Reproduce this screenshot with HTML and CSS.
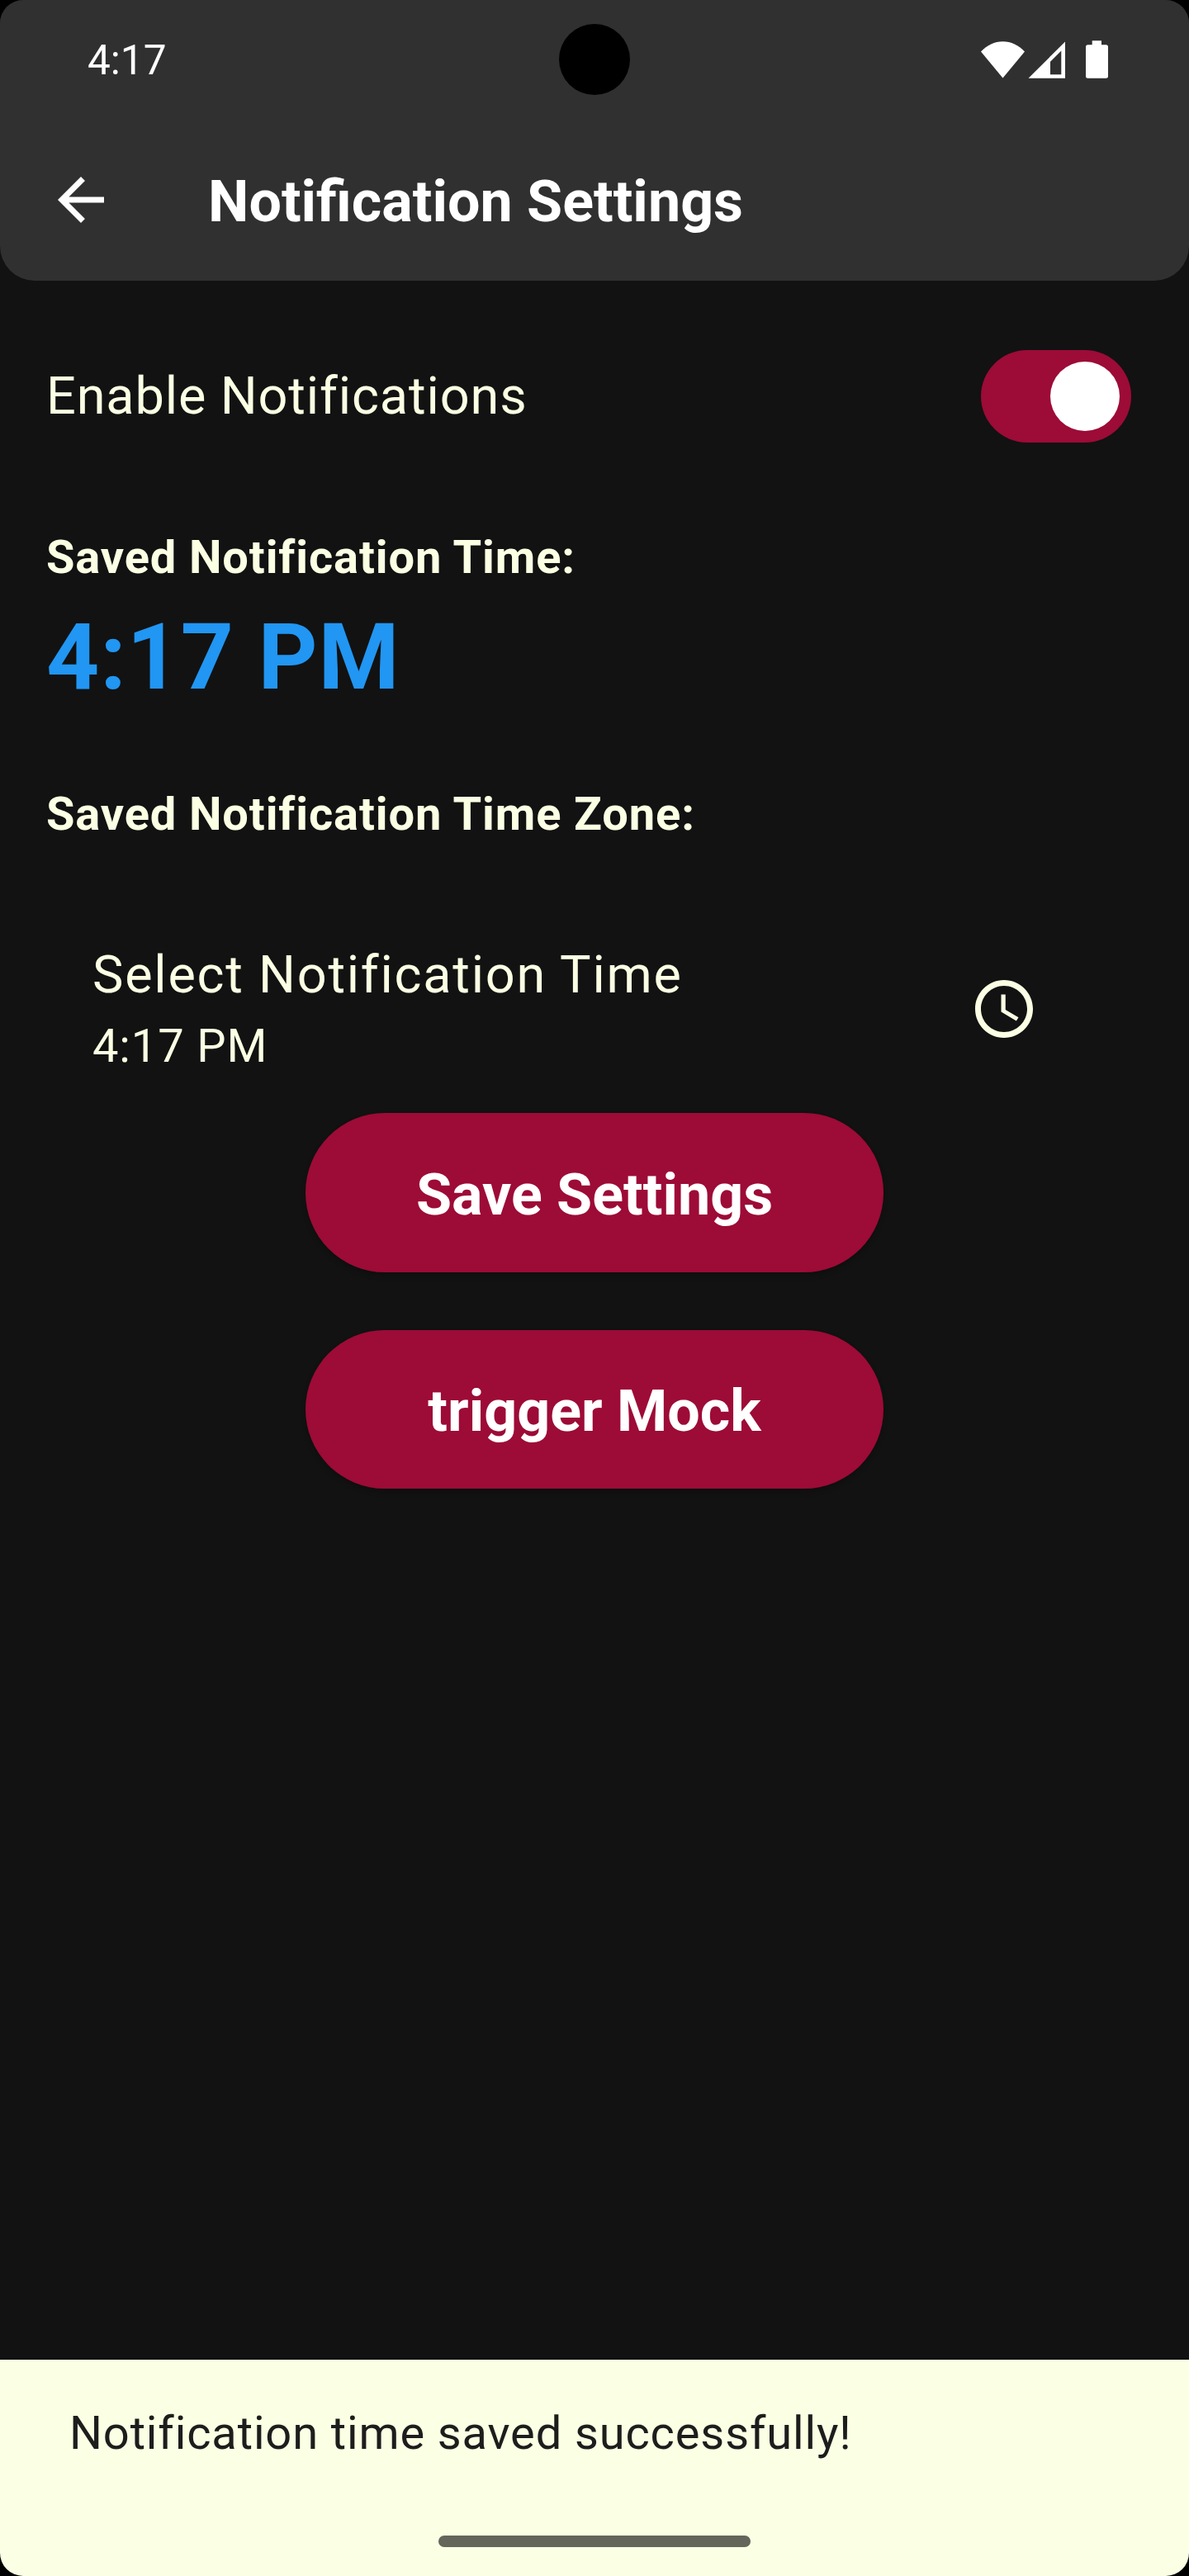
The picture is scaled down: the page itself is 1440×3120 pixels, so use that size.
FILE: index.html
```html
<!DOCTYPE html>
<html lang="en">
<head>
<meta charset="utf-8">
<title>Notification Settings</title>
<link rel="stylesheet" href="styles.css">
</head>
<body>
<div class="screen">
  <header class="header">
    <div class="status">
      <span class="status-time">4:17</span>
      <svg class="status-icons" width="160" height="50" viewBox="0 0 160 50" fill="#fff">
        <path d="M3 16.5C10.500 8.500 19.500 4.200 29.500 4.200S48.500 8.500 56 16.500L29.500 48.500z"/>
        <path fill-rule="evenodd" d="M60.500 48.700L105 4.500V48.700zM87 44.200H100.300V15.500L87 28.700z"/>
        <path d="M137.700 3.200H149V8.200H154.500A2.500 2.500 0 0 1 157 10.700V46.200A2.500 2.500 0 0 1 154.500 48.700H132.500A2.500 2.500 0 0 1 130 46.200V10.700A2.500 2.500 0 0 1 132.500 8.200H137.700z"/>
      </svg>
      <span class="camera"></span>
    </div>
    <div class="toolbar">
      <svg class="back" width="84" height="84" viewBox="0 0 24 24" fill="#fff"><path d="M20 11H7.830l5.590-5.590L12 4l-8 8 8 8 1.410-1.410L7.830 13H20v-2z"/></svg>
      <h1 class="title">Notification Settings</h1>
    </div>
  </header>
  <main class="content">
    <div class="switch-row">
      <span class="switch-label">Enable Notifications</span>
      <span class="switch"><span class="thumb"></span></span>
    </div>
    <p class="caption saved-time">Saved Notification Time:</p>
    <p class="time">4:17 PM</p>
    <p class="caption saved-zone">Saved Notification Time Zone:</p>
    <div class="tile">
      <div class="tile-text">
        <span class="tile-title">Select Notification Time</span>
        <span class="tile-value">4:17 PM</span>
      </div>
      <svg class="clock" width="84" height="84" viewBox="0 0 24 24" fill="#fbffe3"><path d="M11.990 2C6.470 2 2 6.480 2 12s4.470 10 9.990 10C17.520 22 22 17.520 22 12S17.520 2 11.990 2zM12 20c-4.420 0-8-3.580-8-8s3.580-8 8-8 8 3.580 8 8-3.580 8-8 8zM12.500 7H11v6l5.250 3.150.75-1.230-4.500-2.670z"/></svg>
    </div>
    <div class="actions">
      <button class="btn">Save Settings</button>
      <button class="btn">trigger Mock</button>
    </div>
  </main>
  <footer class="snackbar">
    <p class="snackbar-text">Notification time saved successfully!</p>
    <div class="home-bar"></div>
  </footer>
</div>
</body>
</html>
```
FILE: styles.css
```css
* { box-sizing: border-box; margin: 0; padding: 0; }
body { background: #000; font-family: Roboto, sans-serif; }
.screen {
  width: 1440px; height: 3120px; display: flex; flex-direction: column;
  background: #121212; border-radius: 28px; overflow: hidden; color: #fbffe3;
}
.header { height: 340px; background: #303030; border-radius: 0 0 42px 42px; color: #fff; }
.status { position: relative; height: 144px; padding: 46px 98px 0 106px; display: flex; justify-content: space-between; align-items: flex-start; }
.status-time { font-size: 49.5px; line-height: 54px; }
.status-icons { margin-right: -3px; }
.camera { position: absolute; left: 677px; top: 29px; width: 86px; height: 86px; border-radius: 50%; background: #000; }
.toolbar { height: 196px; padding-left: 56px; display: flex; align-items: center; gap: 112px; }
.title { font-size: 70px; line-height: 84px; font-weight: 700; padding-top: 4px; }
.content { flex: 1; min-height: 0; padding: 84px 56px 0; }
.switch-row { display: flex; justify-content: space-between; align-items: center; height: 112px; padding-right: 14px; }
.switch-label { font-size: 63px; line-height: 80px; letter-spacing: 0.875px; }
.switch { width: 182px; height: 112px; border-radius: 56px; padding: 14px; display: flex; justify-content: flex-end; background: #9d0b37; }
.thumb { width: 84px; height: 84px; border-radius: 50%; background: #fff; }
.caption { font-size: 56px; line-height: 80px; font-weight: 700; letter-spacing: 0.875px; }
.saved-time { margin-top: 99px; }
.time { margin-top: 16px; font-size: 112px; line-height: 130px; font-weight: 700; color: #2196f3; letter-spacing: 0.875px; }
.saved-zone { margin-top: 85px; }
.tile { margin-top: 115px; padding: 0 126px 0 56px; display: flex; justify-content: space-between; align-items: center; }
.tile-text { display: flex; flex-direction: column; gap: 6px; }
.tile-title { font-size: 63px; line-height: 80px; letter-spacing: 1.75px; }
.tile-value { font-size: 56px; line-height: 80px; letter-spacing: 0.875px; }
.clock { margin-top: -4px; }
.actions { margin-top: 41px; display: flex; flex-direction: column; align-items: center; gap: 70px; }
.btn {
  width: 700px; height: 192.5px; border: 0; border-radius: 96.25px; background: #9d0b37; color: #fff;
  font-family: inherit; font-size: 70px; line-height: 84px; font-weight: 700; padding-top: 5px;
  box-shadow: 0 4px 6px rgba(0, 0, 0, 0.2);
}
.snackbar { height: 262.5px; background: #fbffe3; color: #1d1d1d; padding: 49px 84px 0; }
.snackbar-text { font-size: 56px; line-height: 80px; letter-spacing: 0.875px; }
.home-bar { width: 378px; height: 14px; margin: 84px auto 0; border-radius: 7px; background: #64655b; }
```
